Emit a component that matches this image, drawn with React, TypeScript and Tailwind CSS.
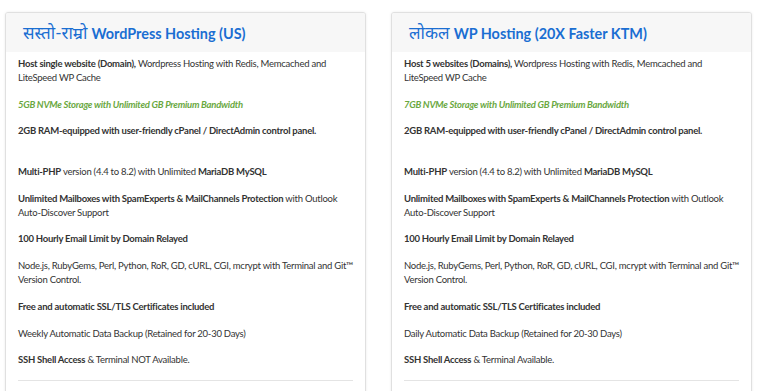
import type { ReactNode } from "react";

type Plan = {
  local: string;
  title: string;
  features: ReactNode[];
};

const plans: Plan[] = [
  {
    local: "सस्तो-राम्रो",
    title: "WordPress Hosting (US)",
    features: [
      <>
        <b>Host single website (Domain),</b> Wordpress Hosting with Redis,
        Memcached and LiteSpeed WP Cache
      </>,
      <span className="font-bold italic text-[#6aa83f]">
        5GB NVMe Storage with Unlimited GB Premium Bandwidth
      </span>,
      <>
        <b>2GB RAM-equipped with user-friendly cPanel / DirectAdmin control panel.</b>
        <br />
        &nbsp;
      </>,
      <>
        <b>Multi-PHP</b> version (4.4 to 8.2) with Unlimited <b>MariaDB MySQL</b>
      </>,
      <>
        <b>Unlimited Mailboxes with SpamExperts &amp; MailChannels Protection</b> with
        Outlook Auto-Discover Support
      </>,
      <b>100 Hourly Email Limit by Domain Relayed</b>,
      <>
        Node.js, RubyGems, Perl, Python, RoR, GD, cURL, CGI, mcrypt with Terminal and
        Git™ Version Control.
      </>,
      <b>Free and automatic SSL/TLS Certificates included</b>,
      <>Weekly Automatic Data Backup (Retained for 20-30 Days)</>,
      <>
        <b>SSH Shell Access</b> &amp; Terminal NOT Available.
      </>,
    ],
  },
  {
    local: "लोकल",
    title: "WP Hosting (20X Faster KTM)",
    features: [
      <>
        <b>Host 5 websites (Domains),</b> Wordpress Hosting with Redis, Memcached and
        LiteSpeed WP Cache
      </>,
      <span className="font-bold italic text-[#6aa83f]">
        7GB NVMe Storage with Unlimited GB Premium Bandwidth
      </span>,
      <>
        <b>2GB RAM-equipped with user-friendly cPanel / DirectAdmin control panel.</b>
        <br />
        &nbsp;
      </>,
      <>
        <b>Multi-PHP</b> version (4.4 to 8.2) with Unlimited <b>MariaDB MySQL</b>
      </>,
      <>
        <b>Unlimited Mailboxes with SpamExperts &amp; MailChannels Protection</b> with
        Outlook Auto-Discover Support
      </>,
      <b>100 Hourly Email Limit by Domain Relayed</b>,
      <>
        Node.js, RubyGems, Perl, Python, RoR, GD, cURL, CGI, mcrypt with Terminal and
        Git™ Version Control.
      </>,
      <b>Free and automatic SSL/TLS Certificates included</b>,
      <>Daily Automatic Data Backup (Retained for 20-30 Days)</>,
      <>
        <b>SSH Shell Access</b> &amp; Terminal Available.
      </>,
    ],
  },
];

function PlanCard({ plan }: { plan: Plan }) {
  return (
    <div className="w-[361px] shrink-0 overflow-hidden rounded-[3px] border border-[#e0e0e0] bg-white shadow-[0_0_3px_rgba(0,0,0,0.08)]">
      <div className="flex h-[39px] items-center bg-[#f7f7f7] px-[17px]">
        <h2 className="whitespace-nowrap leading-none text-[#1a6ed2]">
          <span className="text-[17px] font-normal">{plan.local}</span>{" "}
          <span className="text-[14.4px] font-bold">{plan.title}</span>
        </h2>
      </div>
      <div className="px-[12px] pt-[5px] pb-4 text-[9.5px] leading-[14px] tracking-[-0.25px] text-[#333]">
        {plan.features.map((f, i) => (
          <p key={i} className="mb-[12.7px]">
            {f}
          </p>
        ))}
        <hr className="border-t border-[#e4e4e4]" />
        <div className="h-10" />
      </div>
    </div>
  );
}

export default function App() {
  return (
    <main className="h-[391px] overflow-hidden bg-white font-['Lato','Noto_Sans',sans-serif]">
      <div className="flex gap-[25px] pl-[5px] pt-[12px]">
        {plans.map((p) => (
          <PlanCard key={p.title} plan={p} />
        ))}
      </div>
    </main>
  );
}
